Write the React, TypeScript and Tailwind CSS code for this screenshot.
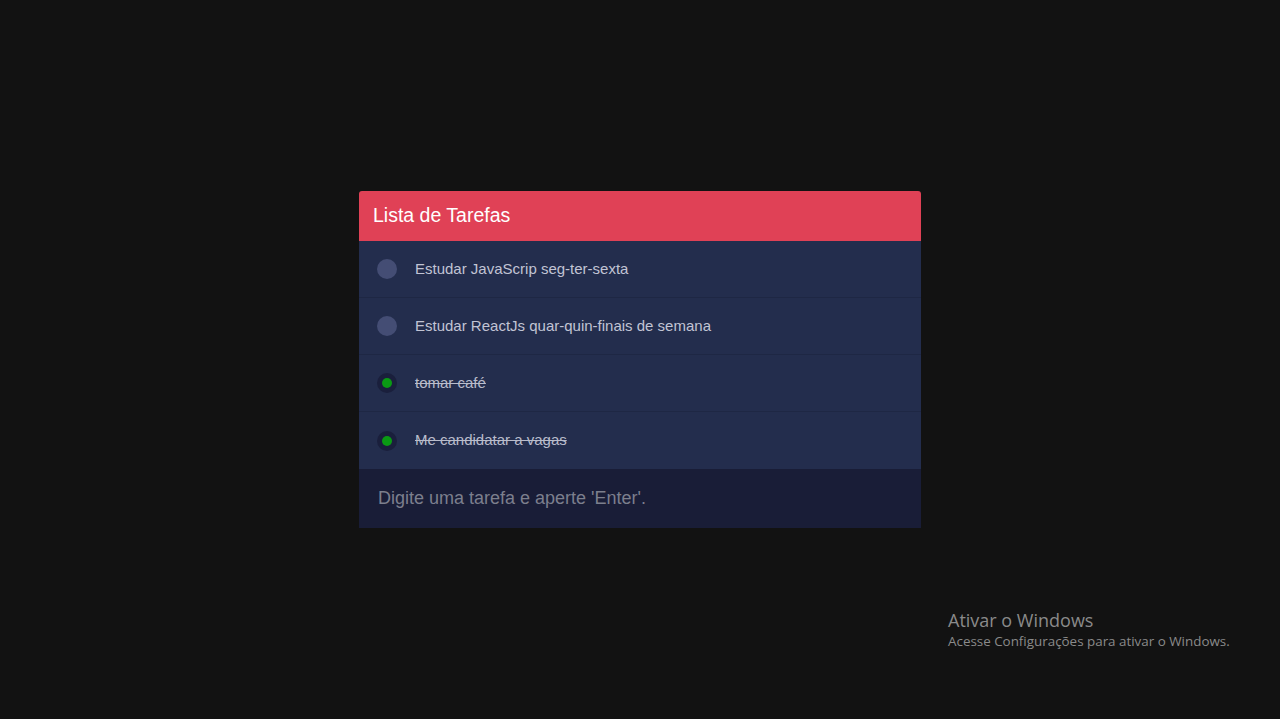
import React from 'react';

interface Task {
  id: number;
  title: string;
  done: boolean;
}

const tasks: Task[] = [
  { id: 1, title: 'Estudar JavaScrip seg-ter-sexta', done: false },
  { id: 2, title: 'Estudar ReactJs quar-quin-finais de semana', done: false },
  { id: 3, title: 'tomar café', done: true },
  { id: 4, title: 'Me candidatar a vagas', done: true },
];

const TaskItem: React.FC<{ task: Task }> = ({ task }) => {
  return (
    <li className="h-[57px] flex items-center px-[18px] border-b border-[#1e2744] last:border-b-0">
      {task.done ? (
        <span className="w-5 h-5 rounded-full bg-[#1a1f3c] flex items-center justify-center shrink-0">
          <span className="w-[10px] h-[10px] rounded-full bg-[#0a9a14]" />
        </span>
      ) : (
        <span className="w-5 h-5 rounded-full bg-[#444d74] shrink-0" />
      )}
      <span
        className={
          task.done
            ? 'ml-[18px] text-[15px] text-[#b9bccb] line-through'
            : 'ml-[18px] text-[15px] text-[#c1c4d4]'
        }
      >
        {task.title}
      </span>
    </li>
  );
};

export default function App() {
  return (
    <div
      className="min-h-screen w-full bg-[#121212] relative"
      style={{ fontFamily: '"Liberation Sans", Arial, sans-serif' }}
    >
      <div className="pt-[191px] flex justify-center">
        <div className="w-[562px] rounded-t-[3px] overflow-hidden">
          <header className="h-[50px] bg-[#e04156] flex items-center px-[14px]">
            <h1 className="text-[19.5px] text-white">Lista de Tarefas</h1>
          </header>
          <ul className="bg-[#232d4d]">
            {tasks.map((t) => (
              <TaskItem key={t.id} task={t} />
            ))}
          </ul>
          <input
            className="w-full h-[59px] bg-[#191d37] px-[19px] text-[18px] text-[#c3c6d3] placeholder:text-[#7c7f8d] outline-none"
            placeholder="Digite uma tarefa e aperte 'Enter'."
          />
        </div>
      </div>
      <div
        className="absolute left-[948px] top-[608px] text-[#8a8a8a]"
        style={{ fontFamily: '"Open Sans", "Noto Sans", sans-serif' }}
      >
        <div className="text-[18px] leading-[24px]">Ativar o Windows</div>
        <div className="text-[13.4px] leading-[18px]">Acesse Configurações para ativar o Windows.</div>
      </div>
    </div>
  );
}
